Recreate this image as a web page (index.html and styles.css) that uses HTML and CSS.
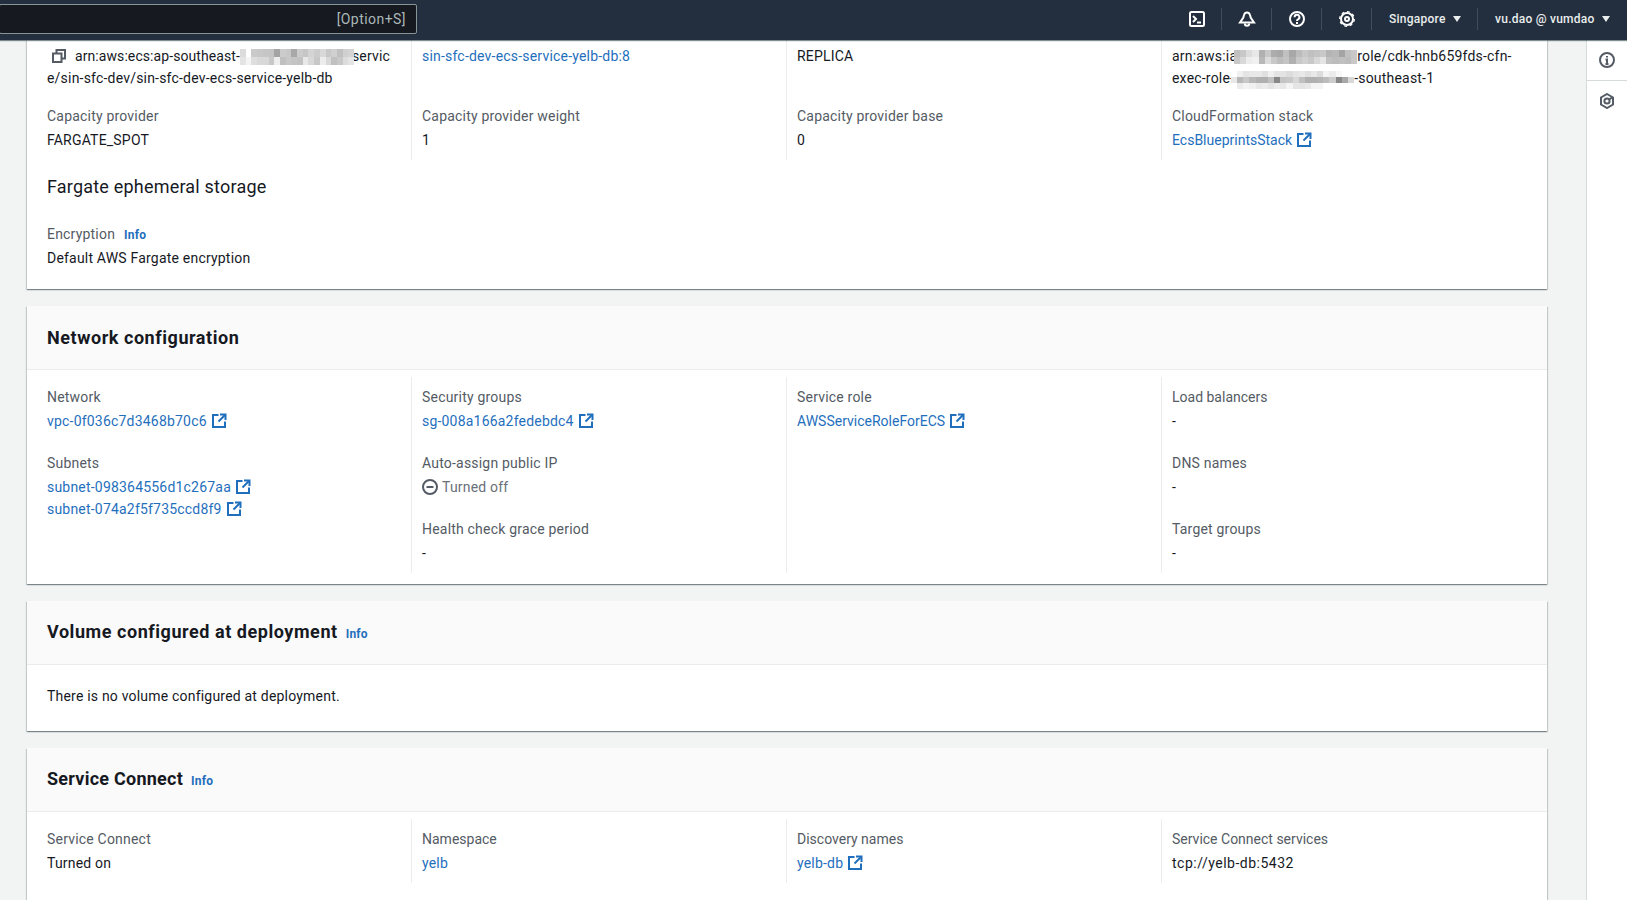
FILE: index.html
```html
<!DOCTYPE html>
<html lang="en">
<head>
<meta charset="utf-8">
<title>Service details</title>
<link rel="stylesheet" href="styles.css">
</head>
<body>
<svg class="defs" width="0" height="0" aria-hidden="true">
  <symbol id="ext" viewBox="0 0 16 16"><path d="M14 8.500V14H2V2h5.500"/><path d="M9 1.500h5.500V7"/><path d="M14 2 7.500 8.500"/></symbol>
</svg>
<header class="topbar">
  <div class="search"><span>[Option+S]</span></div>
  <nav class="nav">
    <div class="nav-icon"><svg class="ico" viewBox="0 0 16 16"><rect x="1" y="1" width="14" height="14" rx="1.5"/><path d="m4 5 3 3-3 3M8 11.5h4"/></svg></div>
    <div class="nav-icon"><svg class="ico" viewBox="0 0 16 16"><path d="M8 1.5c1.6 0 2.6 1 3 2.6l.8 2.8L15 11.5H1l3.200-4.600.8-2.800c.4-1.600 1.400-2.600 3-2.600z"/><path d="M5.800 12.500a2.200 2.200 0 0 0 4.400 0"/></svg></div>
    <div class="nav-icon"><svg class="ico" viewBox="0 0 16 16"><circle cx="8" cy="8" r="7"/><path d="M5.600 6.200a2.400 2.400 0 1 1 3.400 2.200c-.7.3-1 .7-1 1.600M8 11v2"/></svg></div>
    <div class="nav-icon"><svg class="ico" viewBox="0 0 16 16"><circle cx="8" cy="8" r="6"/><circle cx="8" cy="8" r="2"/><circle class="teeth" cx="8" cy="8" r="7.300" pathLength="24" stroke-dasharray="1.500 1.500"/></svg></div>
    <div class="nav-menu nav-region"><span>Singapore</span><svg class="caret" viewBox="0 0 8 6"><path d="M0 0h8L4 6z"/></svg></div>
    <div class="nav-menu nav-user"><span>vu.dao @ vumdao</span><svg class="caret" viewBox="0 0 8 6"><path d="M0 0h8L4 6z"/></svg></div>
  </nav>
</header>
<div class="workspace">
  <main class="main">
    <section class="card card-first">
      <div class="grid grid-tight">
        <div class="col">
          <div class="item">
            <div class="value"><svg class="copy" viewBox="0 0 16 16"><path d="M2 5.500h8.500V14H2z"/><path d="M5.500 5V2H14v8.500h-3"/></svg><span class="tight">arn:aws:ecs:ap-southeast-</span><svg class="mosaic mosaic-a" viewBox="0 0 20 2" preserveAspectRatio="none" shape-rendering="crispEdges"><rect width="1" height="1" x="0" y="0" fill="#dcdcdc"/><rect width="1" height="1" x="1" y="0" fill="#ffffff"/><rect width="1" height="1" x="2" y="0" fill="#cacaca"/><rect width="1" height="1" x="3" y="0" fill="#c8c8c8"/><rect width="1" height="1" x="4" y="0" fill="#c6c6c6"/><rect width="1" height="1" x="5" y="0" fill="#c4c4c4"/><rect width="1" height="1" x="6" y="0" fill="#a4a4a4"/><rect width="1" height="1" x="7" y="0" fill="#cccccc"/><rect width="1" height="1" x="8" y="0" fill="#c8c8c8"/><rect width="1" height="1" x="9" y="0" fill="#a8a8a8"/><rect width="1" height="1" x="10" y="0" fill="#cccccc"/><rect width="1" height="1" x="11" y="0" fill="#c6c6c6"/><rect width="1" height="1" x="12" y="0" fill="#d4d4d4"/><rect width="1" height="1" x="13" y="0" fill="#cccccc"/><rect width="1" height="1" x="14" y="0" fill="#d8d8d8"/><rect width="1" height="1" x="15" y="0" fill="#c8c8c8"/><rect width="1" height="1" x="16" y="0" fill="#d0d0d0"/><rect width="1" height="1" x="17" y="0" fill="#c0c0c0"/><rect width="1" height="1" x="18" y="0" fill="#d0d0d0"/><rect width="1" height="1" x="19" y="0" fill="#d4d4d4"/><rect width="1" height="1" x="0" y="1" fill="#e4e4e4"/><rect width="1" height="1" x="1" y="1" fill="#f4f4f4"/><rect width="1" height="1" x="2" y="1" fill="#dedede"/><rect width="1" height="1" x="3" y="1" fill="#d8d8d8"/><rect width="1" height="1" x="4" y="1" fill="#d8d8d8"/><rect width="1" height="1" x="5" y="1" fill="#c8c8c8"/><rect width="1" height="1" x="6" y="1" fill="#eeeeee"/><rect width="1" height="1" x="7" y="1" fill="#c0c0c0"/><rect width="1" height="1" x="8" y="1" fill="#c8c8c8"/><rect width="1" height="1" x="9" y="1" fill="#c4c4c4"/><rect width="1" height="1" x="10" y="1" fill="#c2c2c2"/><rect width="1" height="1" x="11" y="1" fill="#e8e8e8"/><rect width="1" height="1" x="12" y="1" fill="#d8d8d8"/><rect width="1" height="1" x="13" y="1" fill="#c8c8c8"/><rect width="1" height="1" x="14" y="1" fill="#ececec"/><rect width="1" height="1" x="15" y="1" fill="#d8d8d8"/><rect width="1" height="1" x="16" y="1" fill="#c0c0c0"/><rect width="1" height="1" x="17" y="1" fill="#c8c8c8"/><rect width="1" height="1" x="18" y="1" fill="#dcdcdc"/><rect width="1" height="1" x="19" y="1" fill="#e4e4e4"/></svg>servic<br>e/sin-sfc-dev/sin-sfc-dev-ecs-service-yelb-db</div>
          </div>
          <div class="item">
            <div class="label">Capacity provider</div>
            <div class="value">FARGATE_SPOT</div>
          </div>
        </div>
        <div class="col">
          <div class="item item-tall"><div class="value"><a class="link" href="#">sin-sfc-dev-ecs-service-yelb-db:8</a></div></div>
          <div class="item">
            <div class="label">Capacity provider weight</div>
            <div class="value">1</div>
          </div>
        </div>
        <div class="col">
          <div class="item item-tall"><div class="value">REPLICA</div></div>
          <div class="item">
            <div class="label">Capacity provider base</div>
            <div class="value">0</div>
          </div>
        </div>
        <div class="col">
          <div class="item">
            <div class="value">arn:aws:ia<svg class="mosaic mosaic-b" viewBox="0 0 20 2" preserveAspectRatio="none" shape-rendering="crispEdges"><rect width="1" height="1" x="0" y="0" fill="#c0c0c0"/><rect width="1" height="1" x="1" y="0" fill="#c8c8c8"/><rect width="1" height="1" x="2" y="0" fill="#dcdcdc"/><rect width="1" height="1" x="3" y="0" fill="#e8e8e8"/><rect width="1" height="1" x="4" y="0" fill="#b0b0b0"/><rect width="1" height="1" x="5" y="0" fill="#c8c8c8"/><rect width="1" height="1" x="6" y="0" fill="#acacac"/><rect width="1" height="1" x="7" y="0" fill="#a8a8a8"/><rect width="1" height="1" x="8" y="0" fill="#c0c0c0"/><rect width="1" height="1" x="9" y="0" fill="#a8a8a8"/><rect width="1" height="1" x="10" y="0" fill="#bcbcbc"/><rect width="1" height="1" x="11" y="0" fill="#c8c8c8"/><rect width="1" height="1" x="12" y="0" fill="#c0c0c0"/><rect width="1" height="1" x="13" y="0" fill="#c4c4c4"/><rect width="1" height="1" x="14" y="0" fill="#c8c8c8"/><rect width="1" height="1" x="15" y="0" fill="#b4b4b4"/><rect width="1" height="1" x="16" y="0" fill="#b8b8b8"/><rect width="1" height="1" x="17" y="0" fill="#a4a4a4"/><rect width="1" height="1" x="18" y="0" fill="#c0c0c0"/><rect width="1" height="1" x="19" y="0" fill="#c8c8c8"/><rect width="1" height="1" x="0" y="1" fill="#c8c8c8"/><rect width="1" height="1" x="1" y="1" fill="#d8d8d8"/><rect width="1" height="1" x="2" y="1" fill="#ececec"/><rect width="1" height="1" x="3" y="1" fill="#f0f0f0"/><rect width="1" height="1" x="4" y="1" fill="#b8b8b8"/><rect width="1" height="1" x="5" y="1" fill="#dcdcdc"/><rect width="1" height="1" x="6" y="1" fill="#c8c8c8"/><rect width="1" height="1" x="7" y="1" fill="#bcbcbc"/><rect width="1" height="1" x="8" y="1" fill="#c4c4c4"/><rect width="1" height="1" x="9" y="1" fill="#b0b0b0"/><rect width="1" height="1" x="10" y="1" fill="#c8c8c8"/><rect width="1" height="1" x="11" y="1" fill="#d0d0d0"/><rect width="1" height="1" x="12" y="1" fill="#c8c8c8"/><rect width="1" height="1" x="13" y="1" fill="#d8d8d8"/><rect width="1" height="1" x="14" y="1" fill="#e4e4e4"/><rect width="1" height="1" x="15" y="1" fill="#c0c0c0"/><rect width="1" height="1" x="16" y="1" fill="#bcbcbc"/><rect width="1" height="1" x="17" y="1" fill="#c0c0c0"/><rect width="1" height="1" x="18" y="1" fill="#bcbcbc"/><rect width="1" height="1" x="19" y="1" fill="#c8c8c8"/></svg>role/cdk-hnb659fds-cfn-<br>exec-role-<svg class="mosaic mosaic-c" viewBox="0 0 20 3" preserveAspectRatio="none" shape-rendering="crispEdges"><rect width="1" height="1" x="0" y="0" fill="#ffffff"/><rect width="1" height="1" x="1" y="0" fill="#f0f0f0"/><rect width="1" height="1" x="2" y="0" fill="#e4e4e4"/><rect width="1" height="1" x="3" y="0" fill="#e8e8e8"/><rect width="1" height="1" x="4" y="0" fill="#e8e8e8"/><rect width="1" height="1" x="5" y="0" fill="#e0e0e0"/><rect width="1" height="1" x="6" y="0" fill="#f0f0f0"/><rect width="1" height="1" x="7" y="0" fill="#e4e4e4"/><rect width="1" height="1" x="8" y="0" fill="#e4e4e4"/><rect width="1" height="1" x="9" y="0" fill="#dcdcdc"/><rect width="1" height="1" x="10" y="0" fill="#e4e4e4"/><rect width="1" height="1" x="11" y="0" fill="#e8e8e8"/><rect width="1" height="1" x="12" y="0" fill="#e0e0e0"/><rect width="1" height="1" x="13" y="0" fill="#e8e8e8"/><rect width="1" height="1" x="14" y="0" fill="#dcdcdc"/><rect width="1" height="1" x="15" y="0" fill="#f4f4f4"/><rect width="1" height="1" x="16" y="0" fill="#ececec"/><rect width="1" height="1" x="17" y="0" fill="#f8f8f8"/><rect width="1" height="1" x="18" y="0" fill="#ffffff"/><rect width="1" height="1" x="19" y="0" fill="#ffffff"/><rect width="1" height="1" x="0" y="1" fill="#e8e8e8"/><rect width="1" height="1" x="1" y="1" fill="#b8b8b8"/><rect width="1" height="1" x="2" y="1" fill="#c8c8c8"/><rect width="1" height="1" x="3" y="1" fill="#b8b8b8"/><rect width="1" height="1" x="4" y="1" fill="#b0b0b0"/><rect width="1" height="1" x="5" y="1" fill="#b0b0b0"/><rect width="1" height="1" x="6" y="1" fill="#c0c0c0"/><rect width="1" height="1" x="7" y="1" fill="#888888"/><rect width="1" height="1" x="8" y="1" fill="#c4c4c4"/><rect width="1" height="1" x="9" y="1" fill="#c8c8c8"/><rect width="1" height="1" x="10" y="1" fill="#d8d8d8"/><rect width="1" height="1" x="11" y="1" fill="#c0c0c0"/><rect width="1" height="1" x="12" y="1" fill="#b0b0b0"/><rect width="1" height="1" x="13" y="1" fill="#b0b0b0"/><rect width="1" height="1" x="14" y="1" fill="#b4b4b4"/><rect width="1" height="1" x="15" y="1" fill="#bcbcbc"/><rect width="1" height="1" x="16" y="1" fill="#cccccc"/><rect width="1" height="1" x="17" y="1" fill="#888888"/><rect width="1" height="1" x="18" y="1" fill="#a8a8a8"/><rect width="1" height="1" x="19" y="1" fill="#d8d8d8"/><rect width="1" height="1" x="0" y="2" fill="#ffffff"/><rect width="1" height="1" x="1" y="2" fill="#ececec"/><rect width="1" height="1" x="2" y="2" fill="#f4f4f4"/><rect width="1" height="1" x="3" y="2" fill="#f0f0f0"/><rect width="1" height="1" x="4" y="2" fill="#e8e8e8"/><rect width="1" height="1" x="5" y="2" fill="#ececec"/><rect width="1" height="1" x="6" y="2" fill="#e4e4e4"/><rect width="1" height="1" x="7" y="2" fill="#ececec"/><rect width="1" height="1" x="8" y="2" fill="#e8e8e8"/><rect width="1" height="1" x="9" y="2" fill="#f4f4f4"/><rect width="1" height="1" x="10" y="2" fill="#e4e4e4"/><rect width="1" height="1" x="11" y="2" fill="#e4e4e4"/><rect width="1" height="1" x="12" y="2" fill="#e8e8e8"/><rect width="1" height="1" x="13" y="2" fill="#f4f4f4"/><rect width="1" height="1" x="14" y="2" fill="#f4f4f4"/></svg>-southeast-1</div>
          </div>
          <div class="item">
            <div class="label">CloudFormation stack</div>
            <div class="value"><a class="link tight-link" href="#">EcsBlueprintsStack<svg class="ext"><use href="#ext"/></svg></a></div>
          </div>
        </div>
      </div>
      <h3 class="subhead">Fargate ephemeral storage</h3>
      <div class="solo">
        <div class="label">Encryption<a class="info" href="#">Info</a></div>
        <div class="value">Default AWS Fargate encryption</div>
      </div>
    </section>

    <section class="card">
      <header class="card-head"><h2 class="title title-wide">Network configuration</h2></header>
      <div class="grid">
        <div class="col">
          <div class="item"><div class="label">Network</div><div class="value"><a class="link" href="#">vpc-0f036c7d3468b70c6<svg class="ext"><use href="#ext"/></svg></a></div></div>
          <div class="item"><div class="label">Subnets</div><div class="value"><a class="link" href="#">subnet-098364556d1c267aa<svg class="ext"><use href="#ext"/></svg></a><br><a class="link" href="#">subnet-074a2f5f735ccd8f9<svg class="ext"><use href="#ext"/></svg></a></div></div>
        </div>
        <div class="col">
          <div class="item"><div class="label">Security groups</div><div class="value"><a class="link" href="#">sg-008a166a2fedebdc4<svg class="ext"><use href="#ext"/></svg></a></div></div>
          <div class="item"><div class="label">Auto-assign public IP</div><div class="value status"><svg class="stop" viewBox="0 0 16 16"><circle cx="8" cy="8" r="7"/><path d="M4.500 8h7"/></svg>Turned off</div></div>
          <div class="item"><div class="label">Health check grace period</div><div class="value">-</div></div>
        </div>
        <div class="col">
          <div class="item"><div class="label">Service role</div><div class="value"><a class="link tight-link" href="#">AWSServiceRoleForECS<svg class="ext"><use href="#ext"/></svg></a></div></div>
        </div>
        <div class="col">
          <div class="item"><div class="label tight-label">Load balancers</div><div class="value">-</div></div>
          <div class="item"><div class="label">DNS names</div><div class="value">-</div></div>
          <div class="item"><div class="label">Target groups</div><div class="value">-</div></div>
        </div>
      </div>
    </section>

    <section class="card">
      <header class="card-head"><h2 class="title title-wide">Volume configured at deployment<a class="info info-head" href="#">Info</a></h2></header>
      <div class="plain">There is no volume configured at deployment.</div>
    </section>

    <section class="card card-last">
      <header class="card-head"><h2 class="title">Service Connect<a class="info info-head" href="#">Info</a></h2></header>
      <div class="grid">
        <div class="col"><div class="item"><div class="label">Service Connect</div><div class="value">Turned on</div></div></div>
        <div class="col"><div class="item"><div class="label tight-label">Namespace</div><div class="value"><a class="link" href="#">yelb</a></div></div></div>
        <div class="col"><div class="item"><div class="label tight-label">Discovery names</div><div class="value"><a class="link" href="#">yelb-db<svg class="ext"><use href="#ext"/></svg></a></div></div></div>
        <div class="col"><div class="item"><div class="label tight-label">Service Connect services</div><div class="value wide-value">tcp://yelb-db:5432</div></div></div>
      </div>
    </section>
  </main>
  <aside class="tools">
    <div class="tool tool-first"><svg class="tool-ico" viewBox="0 0 16 16"><circle cx="8" cy="8" r="7"/><path d="M6.500 7.500H8V12M6.500 12h3M8 4v1.600"/></svg></div>
    <div class="tool tool-second"><svg class="tool-ico" viewBox="0 0 16 16"><path d="M8 1 14 4.500v7L8 15l-6-3.500v-7z"/><circle cx="8" cy="8" r="2.600"/><path d="m10 6.500 3-1.800"/></svg></div>
  </aside>
</div>
</body>
</html>
```
FILE: styles.css
```css
* { box-sizing: border-box; }
html, body { margin: 0; height: 100%; overflow: hidden; }
body {
  display: flex;
  flex-direction: column;
  background: #f2f3f3;
  color: #16191f;
  font-family: Roboto, "Noto Sans", sans-serif;
  font-size: 14px;
  line-height: 22px;
  letter-spacing: 0.2px;
}
.defs { position: absolute; }
.topbar {
  flex: none;
  height: 40px;
  display: flex;
  align-items: flex-start;
  background: #232f3e;
  box-shadow: 0 1px 1px rgba(0, 28, 36, .5);
  position: relative;
  z-index: 2;
}
.search {
  width: 418px;
  height: 30px;
  margin: 4px 0 0 -1px;
  padding: 0 10px;
  display: flex;
  align-items: center;
  justify-content: flex-end;
  background: #16191f;
  border: 1px solid #879596;
  border-radius: 2px;
  color: #aab7b8;
  letter-spacing: 0.45px;
}
.nav { margin-left: auto; display: flex; align-items: center; height: 38px; }
.nav-icon, .nav-menu {
  height: 22px;
  display: flex;
  align-items: center;
  border-right: 1px solid #414d5c;
}
.nav-icon { width: 50px; justify-content: center; }
.ico { width: 16px; height: 16px; fill: none; stroke: #fff; stroke-width: 2; overflow: visible; }
.ico .teeth { stroke-width: 1.3; }
.nav-menu {
  color: #eaeded;
  font-size: 12px;
  font-weight: 500;
  letter-spacing: 0.25px;
  padding-left: 17px;
}
.nav-region { width: 106px; }
.nav-user { width: 149px; border-right: 0; }
.caret { width: 8px; height: 6px; margin-left: 7px; fill: #eaeded; }
.workspace { flex: 1; min-height: 0; display: flex; }
.main { flex: 1; min-width: 0; padding: 0 39px 0 27px; overflow: hidden; }
.tools { flex: none; width: 41px; background: #fff; border-left: 1px solid #d5dbdb; }
.tool { display: flex; align-items: center; justify-content: center; }
.tool-first { height: 41px; border-bottom: 1px solid #d5dbdb; }
.tool-second { height: 40px; }
.tool-ico { width: 16px; height: 16px; fill: none; stroke: #545b64; stroke-width: 2; }
.card {
  background: #fff;
  margin-bottom: 17px;
  box-shadow: 0 1px 1px 0 rgba(0, 28, 36, .3), 1px 1px 1px 0 rgba(0, 28, 36, .15), -1px 1px 1px 0 rgba(0, 28, 36, .15);
}
.card-first { padding-bottom: 20px; }
.card-last { min-height: 200px; }
.card-head {
  height: 64px;
  padding: 0 20px;
  display: flex;
  align-items: center;
  background: #fafafa;
  border-bottom: 1px solid #eaeded;
}
.title { margin: 0; font-size: 18px; line-height: 22px; font-weight: 700; letter-spacing: 0.25px; }
.title-wide { letter-spacing: 0.55px; }
.grid { display: grid; grid-template-columns: repeat(4, 1fr); padding: 7px 10px 11px; }
.grid-tight { padding-top: 0; padding-bottom: 0; }
.col { padding: 9px 10px 9px 9px; border-left: 1px solid #eaeded; }
.col:first-child { border-left-color: transparent; }
.col + .col { margin-left: -1px; padding-left: 10px; }
.grid-tight .col { padding-top: 5px; }
.item + .item { margin-top: 20px; }
.grid-tight .item + .item { margin-top: 16px; }
.item-tall { height: 44px; }
.label { color: #545b64; display: flex; align-items: baseline; height: 22px; }
.value { margin-top: 2px; }
.grid-tight .item:first-child .value { margin-top: 0; }
.tight { letter-spacing: 0.08px; }
.tight-link { letter-spacing: 0; }
.tight-label { letter-spacing: 0; }
.wide-value { letter-spacing: 0.5px; }
.link { color: #1f6fbd; text-decoration: none; }
.ext { width: 16px; height: 16px; margin-left: 4px; vertical-align: -3px; fill: none; stroke: #1f6fbd; stroke-width: 2; }
.copy { width: 16px; height: 16px; margin: 0 8px 0 4px; vertical-align: -3px; fill: none; stroke: #545b64; stroke-width: 2; }
.mosaic { display: inline-block; }
.mosaic-a { width: 114px; height: 16px; vertical-align: -4px; margin-right: -2px; position: relative; z-index: 1; }
.mosaic-b { width: 123px; height: 14px; vertical-align: -3px; margin-left: -3px; }
.mosaic-c { width: 123px; height: 18px; vertical-align: -6px; margin-left: -3px; }
.status { color: #687078; display: flex; align-items: center; }
.stop { width: 16px; height: 16px; margin-right: 4px; fill: none; stroke: #545b64; stroke-width: 2; }
.subhead { margin: 16px 20px 0; font-size: 18px; line-height: 22px; font-weight: 400; }
.solo { margin: 25px 20px 0; }
.info { color: #1f6fbd; font-size: 12px; font-weight: 700; letter-spacing: 0.2px; text-decoration: none; margin-left: 9px; }
.info-head { margin-left: 8px; }
.plain { padding: 20px 20px 24px; }
```
